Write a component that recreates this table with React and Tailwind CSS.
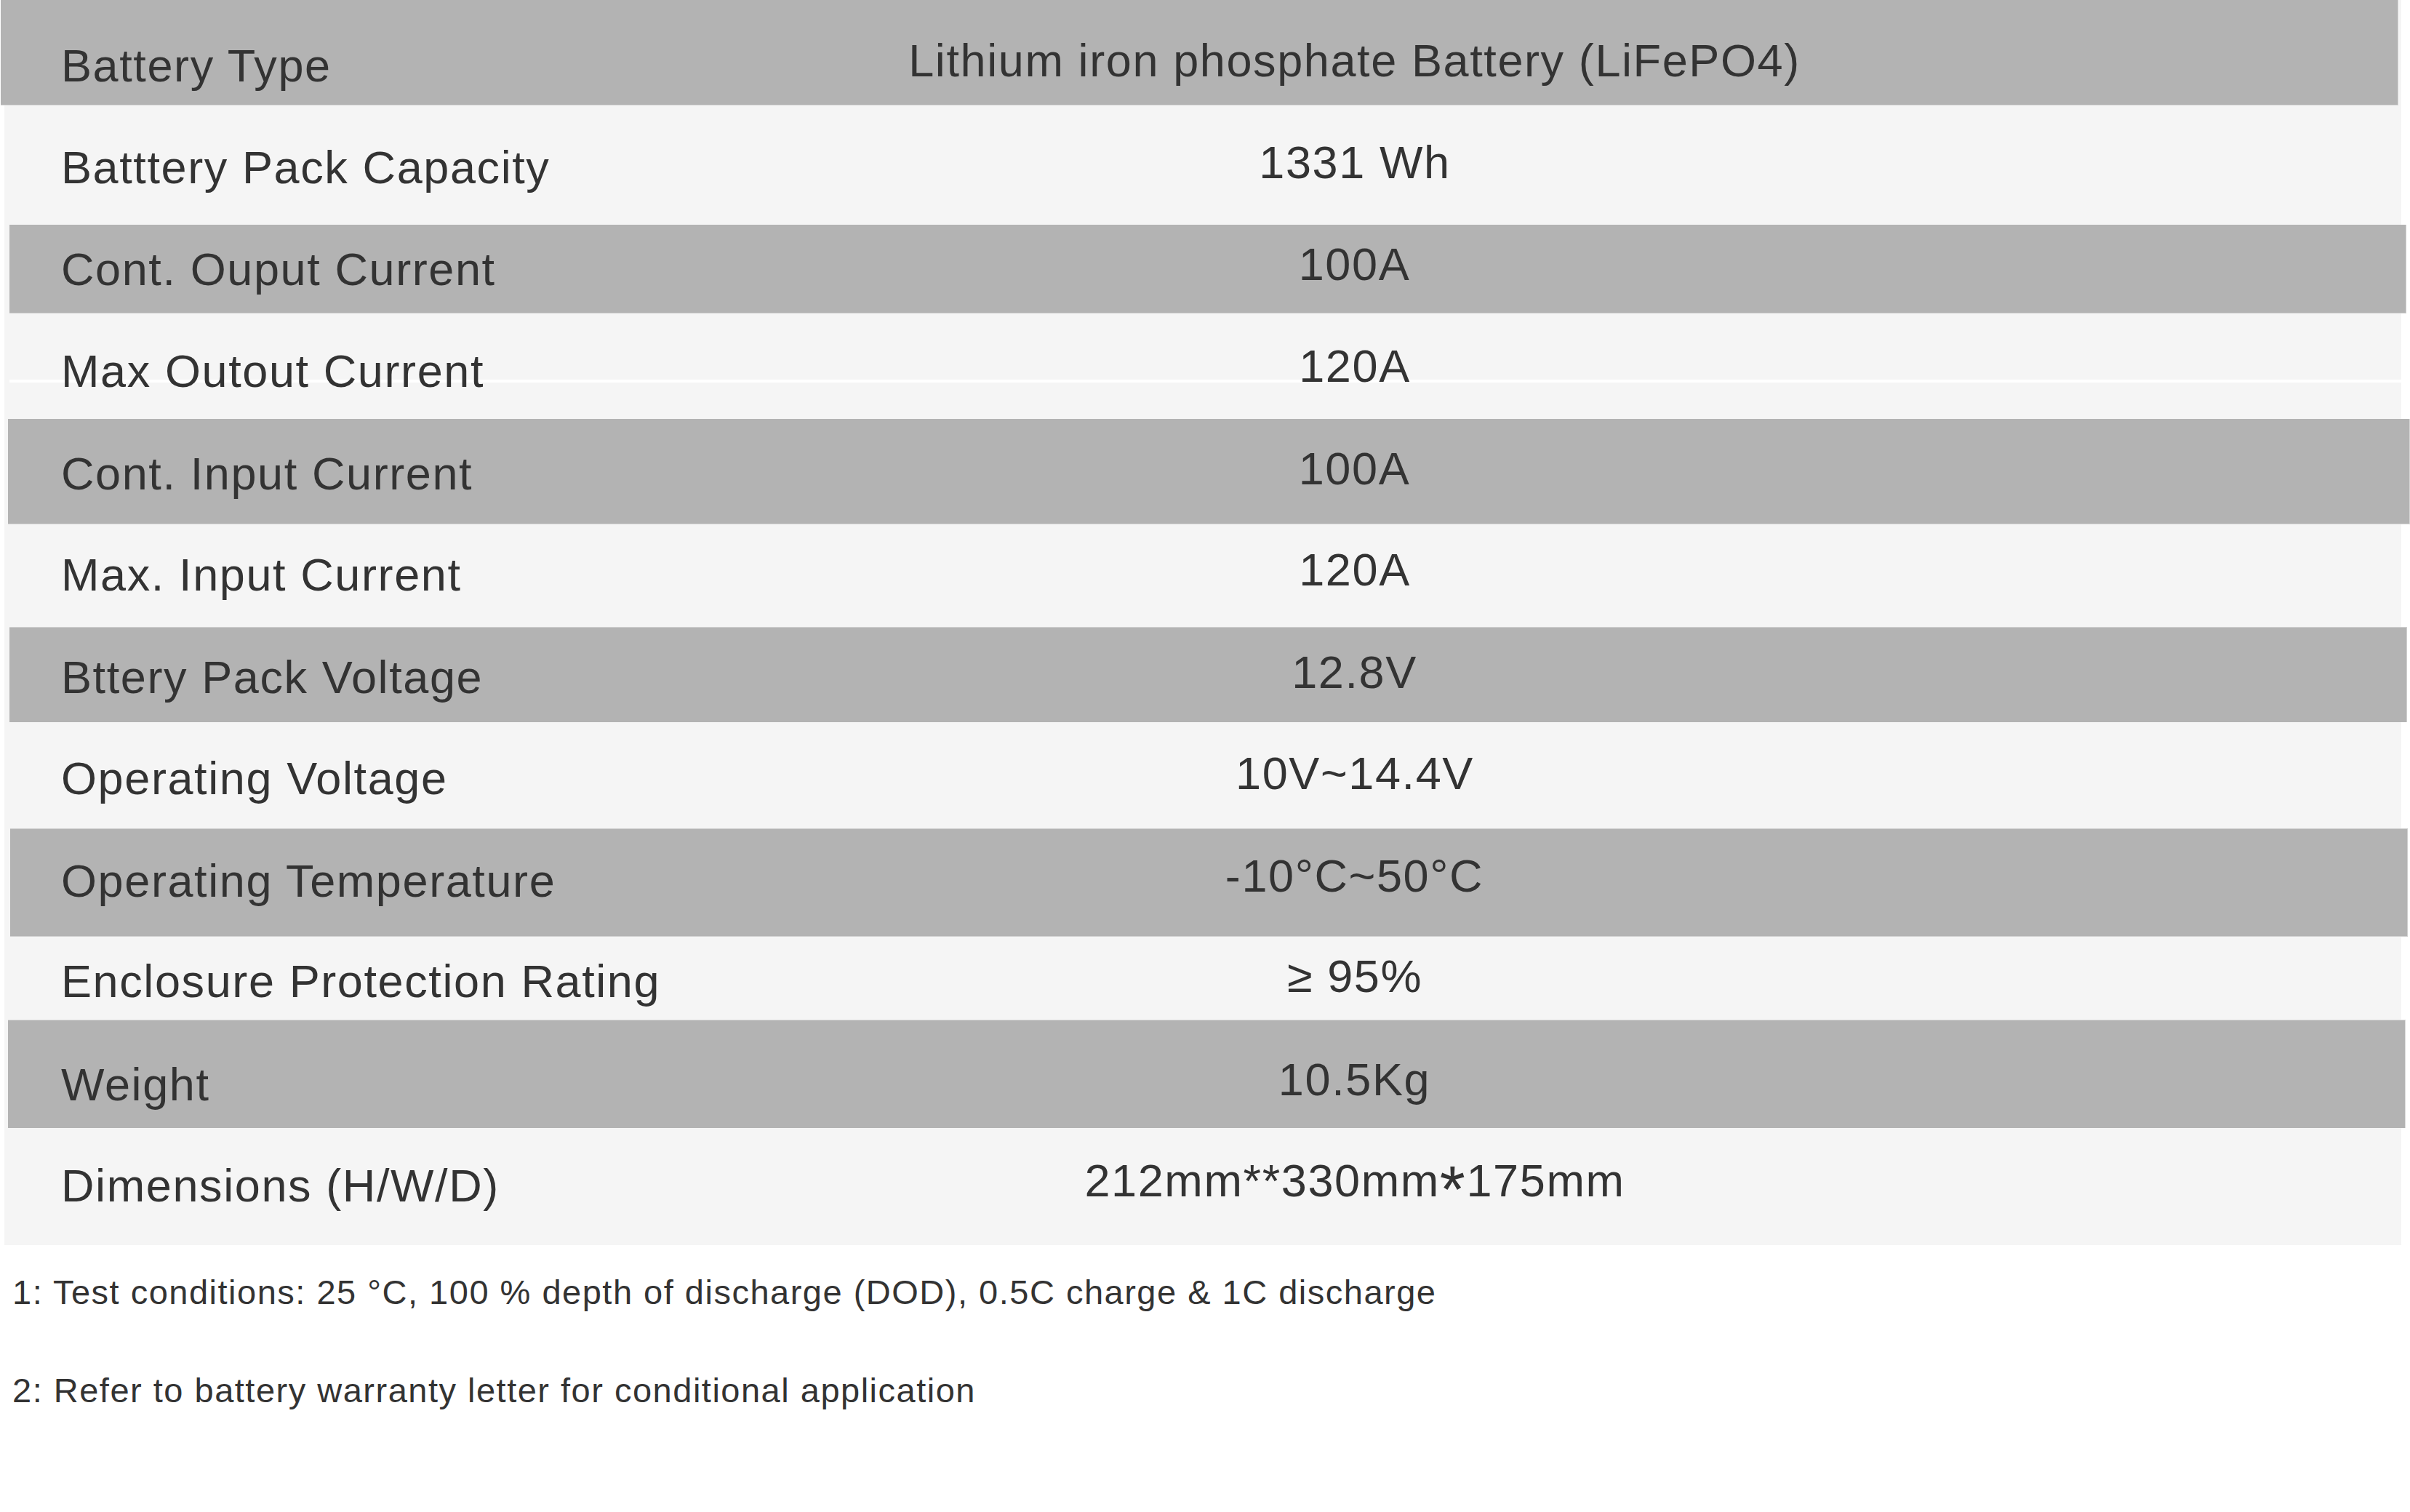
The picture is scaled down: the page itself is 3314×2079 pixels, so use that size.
const rows = [
  {
    label: "Battery Type",
    value: "Lithium iron phosphate Battery (LiFePO4)",
    box: "h-[145px] -ml-[5px] mr-[4px] pt-[59px] bg-[#b3b3b3] border-b border-r border-[#d6d6d6]",
    lab: "w-[427px] pl-[83px]",
  },
  {
    label: "Batttery Pack Capacity",
    value: "1331 Wh",
    box: "h-[164px] pt-[54px]",
    lab: "w-[418px] pl-[78px]",
  },
  {
    label: "Cont. Ouput Current",
    value: "100A",
    box: "h-[122px] ml-[7px] -mr-[7px] pt-[30px] bg-[#b3b3b3] border-b border-r border-[#cfcfcf]",
    lab: "w-[404px] pl-[71px]",
  },
  {
    label: "Max Outout Current",
    value: "120A",
    box: "h-[145px] pt-[48px] relative",
    lab: "w-[418px] pl-[78px]",
    gap: true,
  },
  {
    label: "Cont. Input Current",
    value: "100A",
    box: "h-[145px] ml-[5px] -mr-[12px] pt-[44px] bg-[#b3b3b3] border-b border-r border-[#d6d6d6]",
    lab: "w-[401px] pl-[73px]",
  },
  {
    label: "Max. Input Current",
    value: "120A",
    box: "h-[141px] pt-[38px]",
    lab: "w-[418px] pl-[78px]",
  },
  {
    label: "Bttery Pack Voltage",
    value: "12.8V",
    box: "h-[131px] ml-[7px] -mr-[8px] pt-[37px] bg-[#b3b3b3] border-t border-r border-[#d0d0d0]",
    lab: "w-[403px] pl-[71px]",
  },
  {
    label: "Operating Voltage",
    value: "10V~14.4V",
    box: "h-[146px] pt-[46px]",
    lab: "w-[418px] pl-[78px]",
  },
  {
    label: "Operating Temperature",
    value: "-10°C~50°C",
    box: "h-[149px] ml-[8px] -mr-[9px] pt-[40px] bg-[#b3b3b3] border-y border-r border-[#cfcfcf]",
    lab: "w-[401px] pl-[70px]",
  },
  {
    label: "Enclosure Protection Rating",
    value: "≥ 95%",
    box: "h-[114px] pt-[30px]",
    lab: "w-[418px] pl-[78px]",
  },
  {
    label: "Weight",
    value: "10.5Kg",
    box: "h-[149px] ml-[5px] -mr-[6px] pt-[57px] bg-[#b3b3b3] border-t border-r border-[#dcdcdc]",
    lab: "w-[407px] pl-[73px]",
  },
  {
    label: "Dimensions (H/W/D)",
    value: (
      <>
        212mm**330mm
        <span className="text-[90px] leading-[0] align-[-22px]">*</span>
        175mm
      </>
    ),
    box: "h-[161px] pt-[48px]",
    lab: "w-[418px] pl-[78px]",
  },
];

export default function App() {
  return (
    <div className="w-[3314px] min-h-[2079px] overflow-hidden bg-white font-['Liberation_Sans',Arial,sans-serif] text-[#333333]">
      <div className="ml-[6px] w-[3296px] bg-[#f5f5f5] text-[63px] leading-[63px] tracking-[1.6px]">
        {rows.map((r, i) => (
          <div key={i} className={`flex items-start ${r.box}`}>
            {r.gap && (
              <div className="absolute left-[7px] right-0 top-[91px] h-[4px] bg-white" />
            )}
            <div className={`relative shrink-0 whitespace-nowrap ${r.lab}`}>{r.label}</div>
            <div className="relative flex-1 -mt-[7px] whitespace-nowrap text-center">{r.value}</div>
          </div>
        ))}
      </div>
      <div className="pl-[17px] text-[47px] leading-[47px] tracking-[1.5px]">
        <p className="mt-[41px]">1: Test conditions: 25 °C, 100 % depth of discharge (DOD), 0.5C charge &amp; 1C discharge</p>
        <p className="mt-[88px]">2: Refer to battery warranty letter for conditional application</p>
      </div>
    </div>
  );
}
